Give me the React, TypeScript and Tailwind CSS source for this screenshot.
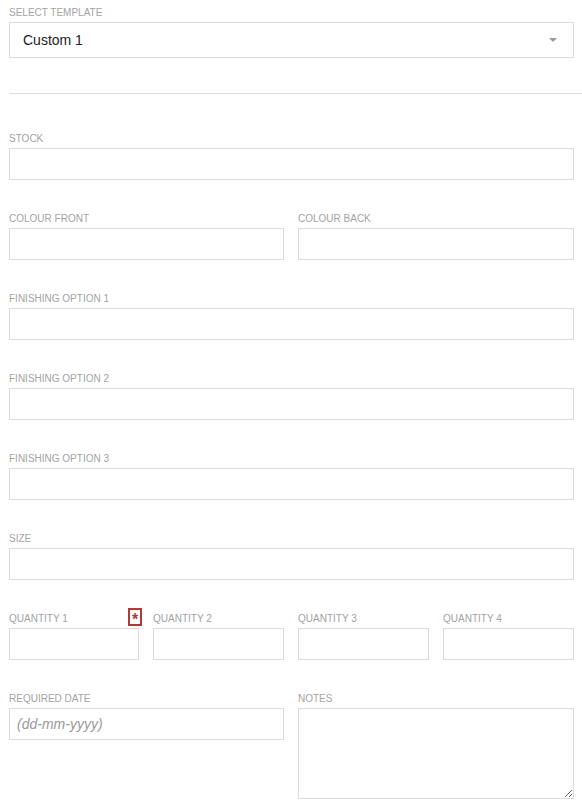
const font = { fontFamily: '"Liberation Sans", Arial, sans-serif' };

const Label = ({ children }: { children: React.ReactNode }) => (
  <div className="text-[10px] leading-[14px] uppercase text-[#a3a3a3] pt-[1px] mb-[2px]">{children}</div>
);

const Field = ({ label, className = '' }: { label: string; className?: string }) => (
  <div className={className}>
    <Label>{label}</Label>
    <input className="block w-full h-[32px] border border-[#dcdcdc] bg-white px-[7px] text-[14px] outline-none" />
  </div>
);

const App = () => {
  return (
    <div className="w-[582px] min-h-[811px] bg-white pl-[9px] pt-[5px]" style={font}>
      <div className="w-[565px]">
        <Label>Select Template</Label>
        <div className="relative flex items-center h-[36px] border border-[#dcdcdc] pl-[13px] pr-[16px]">
          <span className="text-[14px] text-[#222]">Custom 1</span>
          <span className="ml-auto w-0 h-0 border-x-[4px] border-x-transparent border-t-[4px] border-t-[#999]" />
        </div>
      </div>

      <div className="h-px w-[573px] bg-[#dcdcdc] mt-[35px]" />

      <div className="w-[565px] flex flex-col gap-[31px] mt-[37px]">
        <Field label="Stock" />
        <div className="grid grid-cols-[275px_276px] gap-[14px]">
          <Field label="Colour Front" />
          <Field label="Colour Back" />
        </div>
        <Field label="Finishing Option 1" />
        <Field label="Finishing Option 2" />
        <Field label="Finishing Option 3" />
        <Field label="Size" />
        <div className="grid grid-cols-[130px_131px_131px_131px] gap-[14px]">
          <div className="relative">
            <Field label="Quantity 1" />
            <span className="absolute left-[119px] top-[-3px] w-[14px] h-[18px] border-2 border-[#b03a3a] flex items-center justify-center text-[#b03a3a] text-[16px] leading-none font-bold pt-[5px]">
              *
            </span>
          </div>
          <Field label="Quantity 2" />
          <Field label="Quantity 3" />
          <Field label="Quantity 4" />
        </div>
        <div className="grid grid-cols-[275px_276px] gap-[14px]">
          <div>
            <Label>Required Date</Label>
            <input
              placeholder="(dd-mm-yyyy)"
              className="block w-full h-[32px] border border-[#dcdcdc] px-[7px] text-[14px] italic placeholder:text-[#999] outline-none"
            />
          </div>
          <div>
            <Label>Notes</Label>
            <textarea className="block w-full h-[91px] border border-[#dcdcdc] outline-none" />
          </div>
        </div>
      </div>
    </div>
  );
};

export default App;
